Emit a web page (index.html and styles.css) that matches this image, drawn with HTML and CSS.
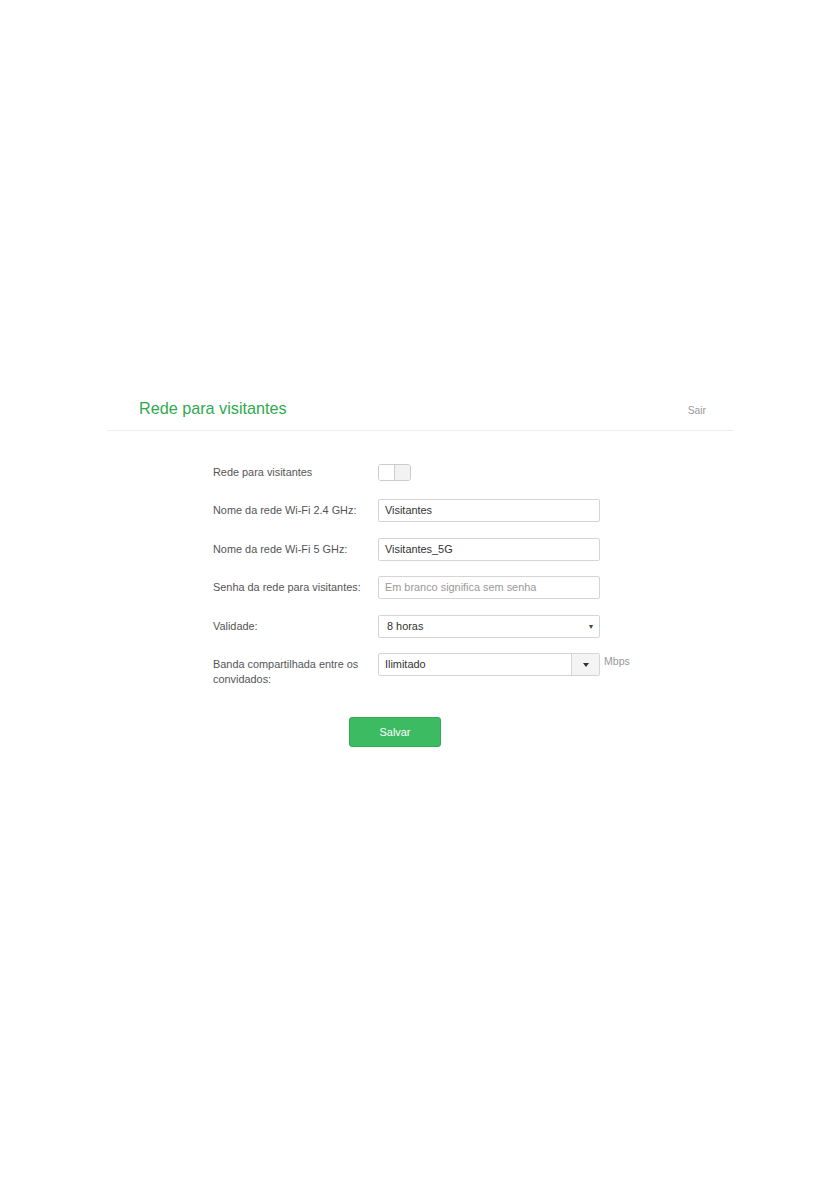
FILE: index.html
```html
<!DOCTYPE html>
<html lang="pt">
<head>
<meta charset="utf-8">
<title>Rede para visitantes</title>
<link rel="stylesheet" href="styles.css">
</head>
<body>
<div class="page">
  <div class="header">
    <h1 class="title">Rede para visitantes</h1>
    <a class="logout" href="#">Sair</a>
  </div>
  <form class="form">
    <div class="row row-toggle">
      <label class="label">Rede para visitantes</label>
      <div class="toggle"><span class="toggle-on"></span><span class="toggle-off"></span></div>
    </div>
    <div class="row">
      <label class="label">Nome da rede Wi-Fi 2.4 GHz:</label>
      <div class="field">Visitantes</div>
    </div>
    <div class="row">
      <label class="label">Nome da rede Wi-Fi 5 GHz:</label>
      <div class="field">Visitantes_5G</div>
    </div>
    <div class="row">
      <label class="label">Senha da rede para visitantes:</label>
      <div class="field placeholder">Em branco significa sem senha</div>
    </div>
    <div class="row">
      <label class="label">Validade:</label>
      <div class="field select"><span class="select-text">8 horas</span><span class="small-arrow">&#9662;</span></div>
    </div>
    <div class="row">
      <label class="label">Banda compartilhada entre os<br>convidados:</label>
      <div class="combo">
        <div class="combo-text">Ilimitado</div>
        <div class="combo-btn"><span class="caret"></span></div>
      </div>
      <span class="unit">Mbps</span>
    </div>
    <div class="actions">
      <button type="button" class="btn">Salvar</button>
    </div>
  </form>
</div>
</body>
</html>
```
FILE: styles.css
```css
html, body {
  margin: 0;
  padding: 0;
  background: #ffffff;
}
body {
  font-family: "Liberation Sans", Arial, sans-serif;
  color: #555;
}
.page {
  padding-top: 398px;
}
.header {
  margin-left: 107px;
  width: 627px;
  box-sizing: border-box;
  display: flex;
  justify-content: space-between;
  align-items: baseline;
  padding: 0 28px 12px 32px;
  border-bottom: 1px solid #eeeeee;
}
.title {
  margin: 0;
  font-size: 16.2px;
  line-height: 20px;
  font-weight: normal;
  color: #2eaa4e;
}
.logout {
  font-size: 10.3px;
  color: #999;
  text-decoration: none;
}
.form {
  margin: 33px 0 0 213px;
}
.row {
  display: flex;
  align-items: flex-start;
  margin-bottom: 15.5px;
}
.row-toggle {
  margin-bottom: 18px;
}
.label {
  width: 165px;
  flex: none;
  font-size: 10.9px;
  line-height: 15px;
  padding-top: 4px;
  color: #555;
}
.row-toggle .label {
  padding-top: 1px;
}
.toggle {
  width: 33px;
  height: 17px;
  box-sizing: border-box;
  border: 1px solid #cccccc;
  border-radius: 3px;
  display: flex;
  overflow: hidden;
}
.toggle-on {
  flex: 1;
  background: #ffffff;
  border-right: 1px solid #cccccc;
}
.toggle-off {
  flex: 1;
  background: #f2f2f2;
}
.field {
  width: 222px;
  height: 23px;
  box-sizing: border-box;
  border: 1px solid #d4d4d4;
  border-radius: 2px;
  padding: 0 6px;
  font-size: 10.9px;
  line-height: 21px;
  color: #333;
  background: #fff;
}
.placeholder {
  color: #999;
}
.select {
  display: flex;
  justify-content: space-between;
  padding: 0 6px 0 8px;
}
.small-arrow {
  font-size: 8px;
  color: #444;
}
.combo {
  width: 222px;
  height: 23px;
  box-sizing: border-box;
  border: 1px solid #d4d4d4;
  border-radius: 2px;
  display: flex;
  overflow: hidden;
}
.combo-text {
  flex: 1;
  padding: 0 6px;
  font-size: 10.9px;
  line-height: 21px;
  color: #333;
}
.combo-btn {
  width: 27px;
  border-left: 1px solid #d4d4d4;
  background: #f4f4f4;
  display: flex;
  align-items: center;
  justify-content: center;
}
.caret {
  width: 0;
  height: 0;
  border-left: 3.5px solid transparent;
  border-right: 3.5px solid transparent;
  border-top: 4px solid #333;
}
.unit {
  margin-left: 4px;
  padding-top: 2px;
  font-size: 10.6px;
  color: #999;
}
.actions {
  padding-top: 14.5px;
  margin-left: 136px;
}
.btn {
  width: 92px;
  height: 30px;
  border: 1px solid #35a857;
  border-radius: 3px;
  background: #3dbb63;
  color: #fff;
  font-family: "Liberation Sans", Arial, sans-serif;
  font-size: 10.9px;
  cursor: pointer;
}
```
